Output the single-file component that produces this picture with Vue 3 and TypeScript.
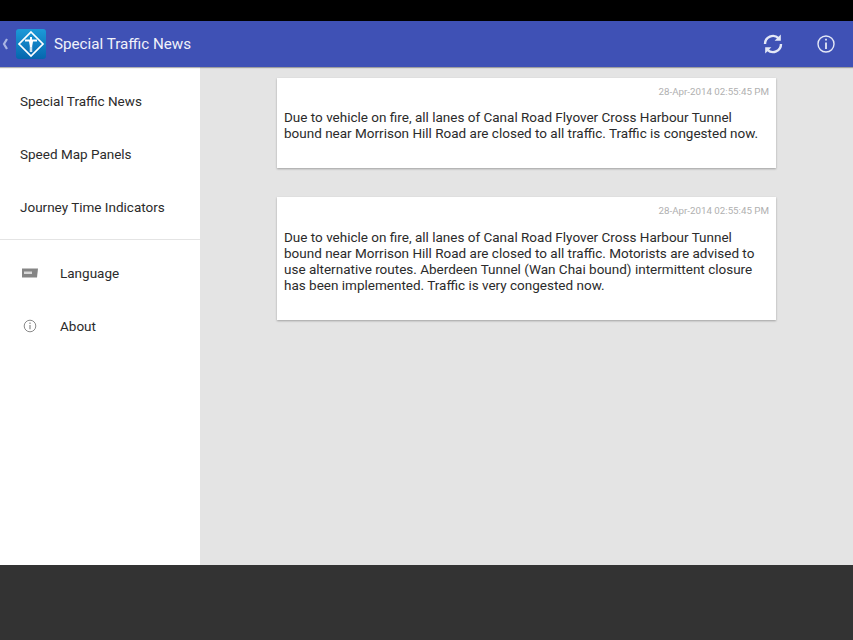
<script setup lang="ts">
const navItems = ['Special Traffic News', 'Speed Map Panels', 'Journey Time Indicators']
const news = [
  {
    time: '28-Apr-2014 02:55:45 PM',
    lines: [
      'Due to vehicle on fire, all lanes of Canal Road Flyover Cross Harbour Tunnel',
      'bound near Morrison Hill Road are closed to all traffic. Traffic is congested now.',
    ],
    extra: false,
  },
  {
    time: '28-Apr-2014 02:55:45 PM',
    lines: [
      'Due to vehicle on fire, all lanes of Canal Road Flyover Cross Harbour Tunnel',
      'bound near Morrison Hill Road are closed to all traffic. Motorists are advised to',
      'use alternative routes. Aberdeen Tunnel (Wan Chai bound) intermittent closure',
      'has been implemented. Traffic is very congested now.',
    ],
    extra: true,
  },
]
</script>

<template>
  <div class="screen">
    <div class="status"></div>
    <header class="bar">
      <svg class="back" width="8" height="14" viewBox="0 0 8 14"><path d="M7 2 L4 7 L7 12" fill="none" stroke="#a9b4e2" stroke-width="2.2" /></svg>
      <svg class="logo" width="30" height="30" viewBox="0 0 30 30">
        <defs>
          <linearGradient id="lg" x1="0" y1="0" x2="0" y2="1">
            <stop offset="0" stop-color="#1c9ad8" />
            <stop offset="1" stop-color="#0666ae" />
          </linearGradient>
        </defs>
        <rect width="30" height="30" rx="3" fill="url(#lg)" />
        <path d="M15 3 L27 15 L15 27 L3 15 Z" fill="none" stroke="#fff" stroke-width="1.7" />
        <path d="M9 11.5 H21" fill="none" stroke="#fff" stroke-width="2" />
        <path d="M15 8 V12" fill="none" stroke="#fff" stroke-width="2" />
        <path d="M12.8 11.5 H17.2 L16.2 17 V23 H15.2 V18 H14.8 V23 H13.8 V17 Z" fill="#fff" />
      </svg>
      <div class="title">Special Traffic News</div>
      <svg class="sync" width="22" height="22" viewBox="0 0 22 22" fill="none" stroke="#e4e8f6" stroke-width="2.4">
        <path d="M3 11 A8 8 0 0 1 16.5 5.2" />
        <path d="M19 11 A8 8 0 0 1 5.5 16.8" />
        <path d="M18.8 1.6 V7.8 H12.6" fill="#e4e8f6" stroke="none" />
        <path d="M3.2 20.4 V14.2 H9.4" fill="#e4e8f6" stroke="none" />
      </svg>
      <svg class="info" width="18" height="18" viewBox="0 0 18 18" fill="none" stroke="#e4e8f6">
        <circle cx="9" cy="9" r="8" stroke-width="1.4" />
        <path d="M9 7.5 V14 M9 3.8 V5.6" stroke-width="1.8" />
      </svg>
    </header>
    <div class="body">
      <aside class="side">
        <nav class="primary">
          <div v-for="item in navItems" :key="item" class="nav-item">{{ item }}</div>
        </nav>
        <div class="secondary">
          <div class="nav-item">
            <svg class="nav-icon" width="16" height="10" viewBox="0 0 16 10">
              <path d="M0 0.5 H16 L15 9.5 H0 Z" fill="#858585" />
              <rect x="2" y="3.5" width="8" height="2.5" fill="#d8d8d8" />
            </svg>
            Language
          </div>
          <div class="nav-item">
            <svg class="nav-icon" width="16" height="14" viewBox="0 0 14 14" fill="none" stroke="#8a8a8a">
              <circle cx="7" cy="7" r="5.8" stroke-width="1" />
              <path d="M7 6 V10.2 M7 3.6 V4.9" stroke-width="1.2" />
            </svg>
            About
          </div>
        </div>
      </aside>
      <main class="content">
        <article v-for="(n, i) in news" :key="i" class="card" :class="{ long: n.extra }">
          <div class="time">{{ n.time }}</div>
          <p class="text"><span v-for="l in n.lines" :key="l" class="line">{{ l }}</span></p>
        </article>
      </main>
    </div>
    <footer class="navbar"></footer>
  </div>
</template>

<style>
html, body { margin: 0; padding: 0; }
</style>

<style scoped>
.screen {
  width: 853px;
  height: 640px;
  display: flex;
  flex-direction: column;
  font-family: Roboto, sans-serif;
  overflow: hidden;
  background: #e4e4e4;
}
.status { height: 21px; background: #000; flex: none; }
.bar {
  height: 46px;
  flex: none;
  background: #3f51b5;
  display: flex;
  align-items: center;
  box-shadow: 0 1px 1px rgba(0,0,0,.3);
  position: relative;
  z-index: 2;
}
.back { flex: none; }
.logo { margin-left: 8px; flex: none; }
.title {
  margin-left: 8px;
  color: #f0f2fa;
  font-size: 15.2px;
  flex: 1;
}
.sync { margin-right: 33px; flex: none; }
.info { margin-right: 18px; flex: none; }
.body { flex: 1; display: flex; min-height: 0; }
.side { width: 200px; background: #fff; flex: none; }
.primary { border-bottom: 1px solid #e4e4e4; padding-top: 7px; padding-bottom: 6px; }
.secondary { padding-top: 6px; }
.nav-item {
  height: 53px;
  display: flex;
  align-items: center;
  padding-left: 20px;
  font-size: 13.5px;
  color: #2b2b2b;
}
.nav-icon { width: 20px; margin-right: 20px; flex: none; }
.content {
  flex: 1;
  padding-top: 11px;
  display: flex;
  flex-direction: column;
  align-items: center;
  gap: 29px;
}
.card {
  width: 499px;
  height: 90px;
  background: #fff;
  box-shadow: 0 1px 2px rgba(0,0,0,.3);
  box-sizing: border-box;
  padding: 7px 7px 0;
}
.card.long { height: 123px; }
.time {
  text-align: right;
  font-size: 9.75px;
  line-height: 13px;
  color: #b0b0b0;
}
.text {
  margin: 11px 0 0;
  font-size: 13.5px;
  line-height: 16px;
  color: #2b2b2b;
}
.card.long .text { margin-top: 12px; }
.line { display: block; white-space: nowrap; }
.navbar { height: 75px; background: #333; flex: none; }
</style>
